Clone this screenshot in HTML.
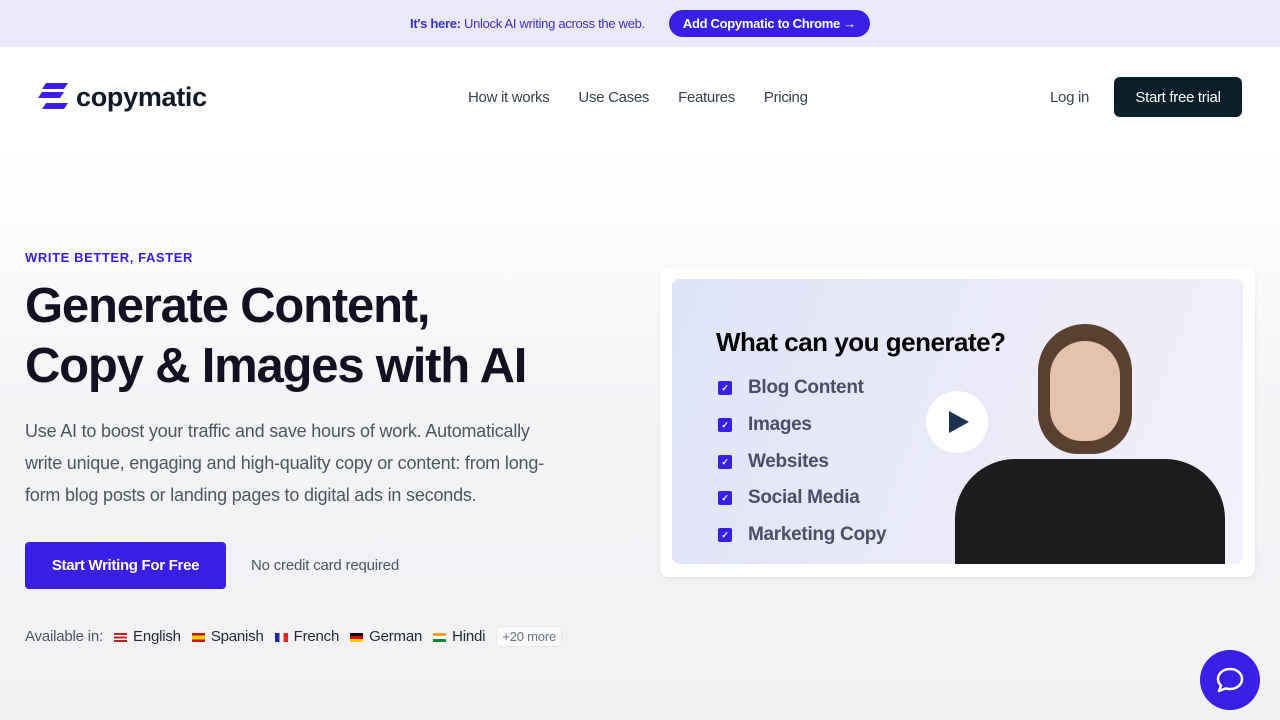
<!DOCTYPE html><html><head><meta charset="utf-8"><style>
*{margin:0;padding:0;box-sizing:border-box}
body{width:1280px;height:720px;overflow:hidden;font-family:"Liberation Sans",sans-serif;background:linear-gradient(#fff 0,#fff 140px,#f4f4f7 400px,#f1f1f4 720px);position:relative;color:#111827}
.top{height:47px;background:#ebe9fb;display:flex;align-items:center;justify-content:center;font-size:13px;color:#3b2fc9;gap:12px;letter-spacing:-0.3px}
.top .b{background:#3b1ee6;color:#fff;font-weight:bold;border-radius:14px;padding:6px 14px;font-size:13px;margin-left:12px}
.nav{position:absolute;top:77px;left:0;width:1280px;height:40px}
.logo{position:absolute;left:38px;top:4px;display:flex;align-items:center;font-size:27px;font-weight:bold;color:#111827;letter-spacing:-0.3px}
.links{position:absolute;left:468px;top:12px;font-size:15px;color:#374151;display:flex;gap:29px;letter-spacing:-0.3px}
.login{position:absolute;left:1050px;top:12px;font-size:15px;color:#374151;letter-spacing:-0.3px}
.trial{position:absolute;left:1114px;top:0;width:128px;height:40px;background:#0b1f2a;color:#fff;border-radius:6px;font-size:15px;display:flex;align-items:center;justify-content:center;letter-spacing:-0.3px}
.eyebrow{position:absolute;left:25px;top:250px;font-size:13px;font-weight:bold;color:#3b1ee6;letter-spacing:.6px}
h1{position:absolute;left:25px;top:276px;font-size:49px;line-height:60px;font-weight:bold;letter-spacing:-1.2px;color:#111122}
.p{position:absolute;left:25px;top:415px;width:520px;font-size:18px;line-height:32px;color:#4b5563;letter-spacing:-0.2px}
.cta{position:absolute;left:25px;top:542px;width:201px;height:47px;background:#3b1ee6;color:#fff;font-weight:bold;font-size:15px;border-radius:4px;display:flex;align-items:center;justify-content:center;letter-spacing:-0.3px}
.nc{position:absolute;left:251px;top:557px;font-size:15px;color:#4b5563;letter-spacing:-0.2px}
.av{position:absolute;left:25px;top:626px;font-size:15px;color:#4b5563;display:flex;align-items:center;gap:11px;letter-spacing:-0.2px}
.av span.l{color:#1f2937}
.f{display:inline-block;width:13px;height:9px;margin-right:6px;vertical-align:middle}
.more{border:1px solid #e5e7eb;background:#fafafa;border-radius:4px;padding:2px 5px;font-size:13px;color:#6b7280}
.card{position:absolute;left:660px;top:267px;width:595px;height:310px;background:#fff;border-radius:8px;box-shadow:0 1px 4px rgba(0,0,0,.08)}
.vid{position:absolute;left:12px;top:12px;width:571px;height:285px;border-radius:8px;background:linear-gradient(110deg,#dfe4f8,#ecebf8 60%,#f3f0fa);overflow:hidden}
.vid h2{position:absolute;left:44px;top:48px;font-size:26px;color:#000;font-weight:bold;letter-spacing:-.5px}
.it{position:absolute;left:46px;font-size:19px;font-weight:bold;color:#4b4f63;display:flex;align-items:center;letter-spacing:-.3px}
.it i{width:14px;height:14px;background:#3b1ee6;border-radius:2px;margin-right:16px;display:inline-block;color:#fff;font-size:9px;font-style:normal;text-align:center;line-height:14px}
.play{position:absolute;left:254px;top:112px;width:62px;height:62px;border-radius:50%;background:#fff}
.chat{position:absolute;left:1200px;top:650px;width:60px;height:60px;border-radius:50%;background:#3b1ee6}
</style></head><body>
<div class="top"><span><b>It's here:</b> Unlock AI writing across the web.</span><span class="b">Add Copymatic to Chrome →</span></div>
<div class="nav">
<div class="logo"><svg width="34" height="32" viewBox="0 0 34 32"><g fill="#3b1ee6"><path d="M8 2h22l-4 6H4z"/><path d="M4 11h22l-4 6H0z"/><path d="M6 20h22l-4 6H2z" transform="translate(2,2)"/></g></svg><span style="margin-left:4px">copymatic</span></div>
<div class="links"><span>How it works</span><span>Use Cases</span><span>Features</span><span>Pricing</span></div>
<div class="login">Log in</div><div class="trial">Start free trial</div></div>
<div class="eyebrow">WRITE BETTER, FASTER</div>
<h1>Generate Content,<br>Copy &amp; Images with AI</h1>
<div class="p">Use AI to boost your traffic and save hours of work. Automatically write unique, engaging and high-quality copy or content: from long-form blog posts or landing pages to digital ads in seconds.</div>
<div class="cta">Start Writing For Free</div><div class="nc">No credit card required</div>
<div class="av">Available in:
<span class="l"><i class="f" style="background:linear-gradient(#b22 0 20%,#fff 20% 40%,#b22 40% 60%,#fff 60% 80%,#b22 80%)"></i>English</span>
<span class="l"><i class="f" style="background:linear-gradient(#c11 0 25%,#fc0 25% 75%,#c11 75%)"></i>Spanish</span>
<span class="l"><i class="f" style="background:linear-gradient(90deg,#22a 0 33%,#fff 33% 66%,#e22 66%)"></i>French</span>
<span class="l"><i class="f" style="background:linear-gradient(#000 0 33%,#d00 33% 66%,#fc0 66%)"></i>German</span>
<span class="l"><i class="f" style="background:linear-gradient(#f93 0 33%,#fff 33% 66%,#183 66%)"></i>Hindi</span>
<span class="more">+20 more</span></div>
<div class="card"><div class="vid">
<h2>What can you generate?</h2>
<div class="it" style="top:98px"><i>✓</i>Blog Content</div>
<div class="it" style="top:135px"><i>✓</i>Images</div>
<div class="it" style="top:172px"><i>✓</i>Websites</div>
<div class="it" style="top:208px"><i>✓</i>Social Media</div>
<div class="it" style="top:245px"><i>✓</i>Marketing Copy</div>
<div class="play"><svg width="62" height="62"><path d="M23 20l20 11-20 11z" fill="#1f3350"/></svg></div>
<div style="position:absolute;left:366px;top:45px;width:94px;height:130px;border-radius:47px 47px 40px 40px;background:#5a4030"></div>
<div style="position:absolute;left:378px;top:62px;width:70px;height:100px;border-radius:35px 35px 32px 32px;background:#e4c2ae"></div>
<div style="position:absolute;left:283px;top:180px;width:270px;height:120px;border-radius:60px 60px 0 0;background:#1c1c1e"></div>
</div></div>
<div class="chat"><svg width="60" height="60"><path d="M30 19c7 0 12 4.5 12 10s-5 10-12 10c-1.5 0-3-.2-4.3-.6L19 41l2-5.5c-2-1.8-3-4-3-6.5 0-5.5 5-10 12-10z" fill="none" stroke="#fff" stroke-width="2.5" stroke-linejoin="round"/></svg></div>
</body></html>
